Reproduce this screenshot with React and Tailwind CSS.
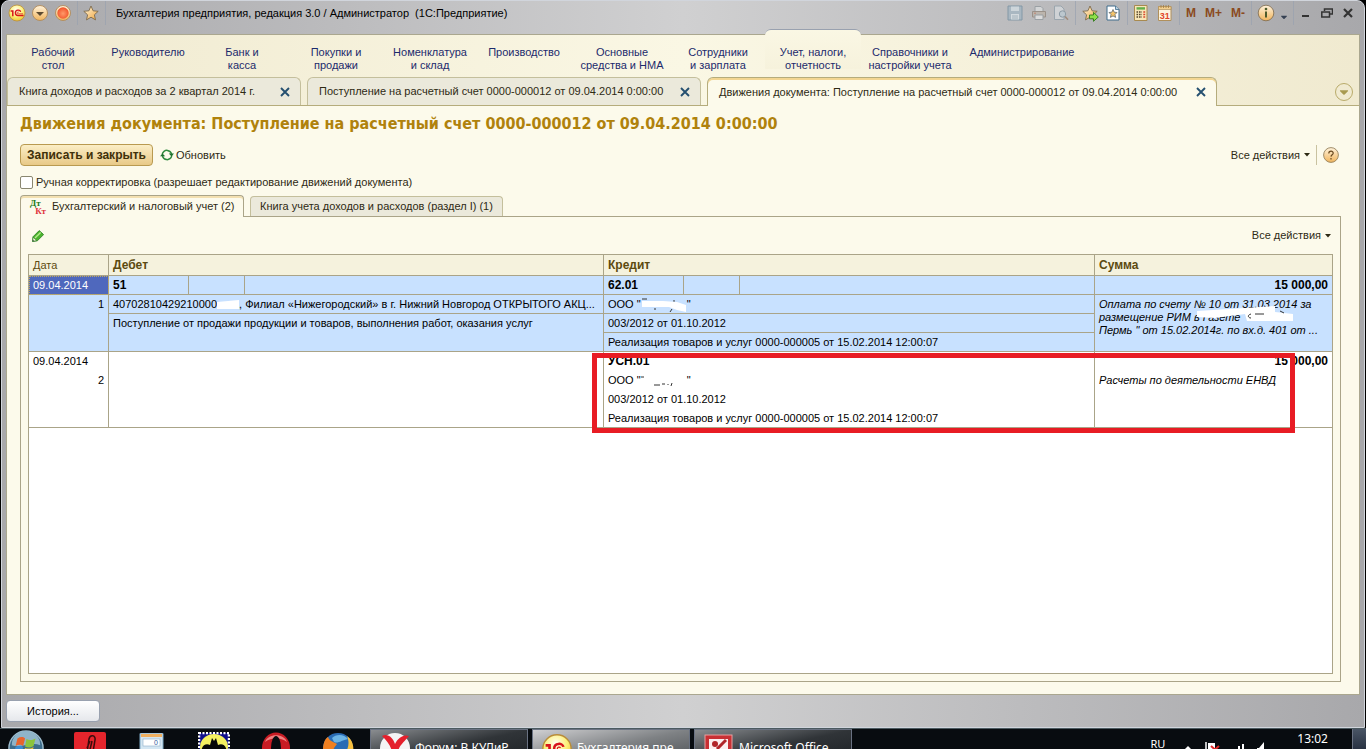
import { clsx } from "clsx";
import { FaCaretDown } from "react-icons/fa";

const sections = [
  { lines: ["Рабочий", "стол"], width: "w-[92px]" },
  { lines: ["Руководителю"], width: "w-[98px]" },
  { lines: ["Банк и", "касса"], width: "w-[90px]" },
  { lines: ["Покупки и", "продажи"], width: "w-[98px]" },
  { lines: ["Номенклатура", "и склад"], width: "w-[90px]" },
  { lines: ["Производство"], width: "w-[98px]" },
  { lines: ["Основные", "средства и НМА"], width: "w-[98px]" },
  { lines: ["Сотрудники", "и зарплата"], width: "w-[94px]" },
  { lines: ["Учет, налоги,", "отчетность"], width: "w-[96px]", active: true },
  { lines: ["Справочники и", "настройки учета"], width: "w-[98px]" },
  { lines: ["Администрирование"], width: "w-[126px]" },
];

const openTabs = [
  { title: "Книга доходов и расходов за 2 квартал 2014 г.", width: "w-[294px]" },
  { title: "Поступление на расчетный счет 0000-000012 от 09.04.2014 0:00:00", width: "w-[394px]" },
  {
    title: "Движения документа: Поступление на расчетный счет 0000-000012 от 09.04.2014 0:00:00",
    width: "w-[510px]",
    active: true,
  },
];

const LogoIcon = ({ className }) => (
  <svg viewBox="0 0 18 18" className={className} aria-hidden="true">
    <defs>
      <radialGradient id="logoFill" cx="0.45" cy="0.3" r="0.8">
        <stop offset="0" stopColor="#fffef0" />
        <stop offset="0.5" stopColor="#fdf07a" />
        <stop offset="1" stopColor="#e8b820" />
      </radialGradient>
    </defs>
    <circle cx="9" cy="9" r="8" fill="url(#logoFill)" stroke="#b98c3a" strokeWidth="0.8" />
    <path d="M2.6 7 H4.8 V12.2" fill="none" stroke="#d8141c" strokeWidth="1.5" />
    <path d="M12.6 7.8 C12.2 5.4 7.4 5.4 7.4 8.8 C7.4 11 8.8 11.5 10 11.5 H15.6" fill="none" stroke="#d8141c" strokeWidth="1.4" />
    <path d="M11 8.4 C10.6 7.7 9.2 7.8 9.2 8.8 C9.2 9.5 9.8 9.8 10.4 9.8 H15" fill="none" stroke="#d8141c" strokeWidth="0.7" />
  </svg>
);

const RoundIcon = ({ red }) => (
  <svg viewBox="0 0 18 18" className="size-[18px]" aria-hidden="true">
    <defs>
      <linearGradient id="orb" x1="0" y1="0" x2="0" y2="1">
        <stop offset="0" stopColor="#fff3dc" />
        <stop offset="1" stopColor="#f0b45c" />
      </linearGradient>
      <radialGradient id="orbRed" cx="0.5" cy="0.55" r="0.5">
        <stop offset="0" stopColor="#ff9a6a" />
        <stop offset="1" stopColor="#f2582e" />
      </radialGradient>
    </defs>
    <circle cx="9" cy="9" r="7.5" fill="url(#orb)" stroke="#b08a5a" strokeWidth="0.9" />
    {red ? (
      <circle cx="9" cy="9" r="5.7" fill="url(#orbRed)" />
    ) : (
      <path d="M5 8 H13 L9 12 Z" fill="#5c4a30" />
    )}
  </svg>
);

const starPath = "M8 1 L10.1 5.8 L15.2 6.3 L11.4 9.8 L12.5 14.9 L8 12.2 L3.5 14.9 L4.6 9.8 L0.8 6.3 L5.9 5.8 Z";

const StarIcon = ({ arrow }) => (
  <svg viewBox="0 0 17 17" className="size-[17px]" aria-hidden="true">
    <defs>
      <linearGradient id="star" x1="0" y1="0" x2="1" y2="1">
        <stop offset="0" stopColor="#fff8e0" />
        <stop offset="1" stopColor="#f0a43c" />
      </linearGradient>
    </defs>
    <path d={starPath} fill="url(#star)" stroke="#7d6a4c" strokeWidth="0.9" strokeLinejoin="round" />
    {arrow && (
      <path d="M7.5 10 H11.5 V7.3 L16.3 12 L11.5 16.3 V13.8 H7.5 Z" fill="#8fe04a" stroke="#2c7a18" strokeWidth="0.9" />
    )}
  </svg>
);

const SaveIcon = () => (
  <svg viewBox="0 0 16 16" className="size-4" aria-hidden="true">
    <path d="M1 1 H15 V15 H1 Z" fill="#a9b7c1" stroke="#8398a6" />
    <path d="M4 1.5 H12 V6 H4 Z" fill="#cdd5da" />
    <path d="M4 9 H12 V14.5 H4 Z" fill="#d4dade" />
    <path d="M5 11 H11 M5 13 H11" stroke="#97a8b3" strokeWidth="0.8" />
  </svg>
);

const PrintIcon = () => (
  <svg viewBox="0 0 16 16" className="size-4" aria-hidden="true">
    <path d="M4 6 V1.5 H10 L12 3.5 V6" fill="#d3d5d6" stroke="#9aa0a4" />
    <path d="M1.5 6.5 H14.5 V12 H1.5 Z" fill="#bcb5ad" stroke="#9a9189" />
    <path d="M4 10 H12 V14.5 H4 Z" fill="#dcdcdc" stroke="#9aa0a4" />
    <path d="M3 8.2 H5" stroke="#bd8573" />
  </svg>
);

const PreviewIcon = () => (
  <svg viewBox="0 0 16 16" className="size-4" aria-hidden="true">
    <path d="M1.5 1 H8 L11 4 V14.5 H1.5 Z" fill="#cfd2d5" stroke="#9aa5ad" />
    <circle cx="9.5" cy="9" r="3.2" fill="#bcc7ce" stroke="#8d9ba5" />
    <path d="M12 11.5 L15 14.8" stroke="#a08c7c" strokeWidth="1.6" />
  </svg>
);

const FavouriteIcon = () => (
  <svg viewBox="0 0 14 16" className="h-4 w-3.5" aria-hidden="true">
    <path d="M1 1 H9.5 L13 4.5 V15 H1 Z" fill="#fff" stroke="#3f6c8c" />
    <path d="M9.5 1 V4.5 H13" fill="#b9d3e4" stroke="#3f6c8c" strokeWidth="0.8" />
    <path
      d="M7 4.5 L8.2 7.2 L11 7.5 L9 9.5 L9.6 12.4 L7 10.9 L4.4 12.4 L5 9.5 L3 7.5 L5.8 7.2 Z"
      fill="#f5c46a"
      stroke="#4c5a66"
      strokeWidth="0.7"
    />
  </svg>
);

const CalcIcon = () => (
  <svg viewBox="0 0 14 16" className="h-4 w-3.5" aria-hidden="true">
    <path d="M0.5 0.5 H13 V15.5 H0.5 Z" fill="#f8e6b8" stroke="#a88a50" />
    <path d="M2.5 2.2 H11 V4.6 H2.5 Z" fill="#63b04a" />
    <path d="M2.5 7 H8 M2.5 9.5 H8 M2.5 12 H8" stroke="#54452c" strokeWidth="1.3" strokeDasharray="1.6 0.9" />
    <path d="M9.3 7 H11.2 M9.3 9.5 H11.2 M9.3 12 H11.2" stroke="#d8482c" strokeWidth="1.3" />
  </svg>
);

const CalendarIcon = () => (
  <svg viewBox="0 0 14 16" className="h-4 w-3.5" aria-hidden="true">
    <path d="M0.5 1.5 H13 V15.5 H0.5 Z" fill="#fdf3e0" stroke="#b0905c" />
    <path d="M0.5 1.5 H13 V4.5 H0.5 Z" fill="#f3cf8e" stroke="#b0905c" strokeWidth="0.7" />
    <path d="M3 0 V3 M5.5 0 V3 M8 0 V3 M10.5 0 V3" stroke="#a07c48" strokeWidth="0.8" />
    <text x="6.8" y="13.6" textAnchor="middle" fontSize="9" fontWeight="bold" fill="#e0442a" fontFamily="Liberation Sans, sans-serif">
      31
    </text>
  </svg>
);

const InfoIcon = () => (
  <svg viewBox="0 0 18 18" className="size-[18px]" aria-hidden="true">
    <circle cx="9" cy="9" r="7.8" fill="url(#orb)" stroke="#7d6a4c" strokeWidth="0.8" />
    <circle cx="9" cy="5" r="1.3" fill="#4c5a2a" />
    <path d="M9 7.5 V13.5" stroke="#4c5a2a" strokeWidth="2" />
  </svg>
);

const CloseIcon = () => (
  <svg viewBox="0 0 10 10" className="size-2.5" aria-hidden="true">
    <path d="M1 1 L9 9 M9 1 L1 9" stroke="#255070" strokeWidth="1.9" />
  </svg>
);

const RefreshIcon = () => (
  <svg viewBox="0 0 14 12" className="h-3 w-3.5" aria-hidden="true">
    <path d="M2.2 5.5 C2.5 2.8 5 1 7.5 1.4 C9.4 1.7 11 3 11.6 5" fill="none" stroke="#2f8a3e" strokeWidth="1.5" />
    <path d="M11.8 6.5 C11.4 9.2 9 11 6.5 10.6 C4.6 10.3 3 9 2.4 7" fill="none" stroke="#2f8a3e" strokeWidth="1.5" />
    <path d="M8.8 4.6 H14 L11.5 7.6 Z M0 7.2 H5.2 L2.5 4.4 Z" fill="#1f7030" />
  </svg>
);

const PencilIcon = () => (
  <svg viewBox="0 0 12 12" className="size-3" aria-hidden="true">
    <path d="M0.6 11.4 L1 6.8 L7.2 0.6 L11.6 4.6 L5.4 10.8 Z" fill="#4cb42e" stroke="#237a1c" strokeWidth="0.8" />
    <path d="M3 8 L8.6 2.4" stroke="#b4ec8c" strokeWidth="1.4" />
    <path d="M1.2 7.2 L4.8 10.6 L0.6 11.4 Z" fill="#f2f2d8" stroke="#237a1c" strokeWidth="0.6" />
    <path d="M0.6 11.4 L1 9.9 L2 11 Z" fill="#223" />
  </svg>
);

const Separator = () => <span className="h-6 w-px bg-gray-400/70" />;

const TitleBar = () => (
  <header className="flex h-[33px] items-start pt-px pr-1.5 pl-0.5">
    <div className="flex h-[22px] items-center">
      <button type="button" aria-label="Главное меню"><LogoIcon className="size-[18px]" /></button>
      <button type="button" aria-label="Меню функций" className="ml-[5px]"><RoundIcon /></button>
      <button type="button" aria-label="Закрыть окно" className="mx-[5px]"><RoundIcon red /></button>
      <Separator />
      <button type="button" aria-label="Избранное" className="mx-[5px]"><StarIcon /></button>
      <Separator />
    </div>
    <h1 className="ml-2.5 h-[22px] whitespace-pre text-[11px] leading-[22px] text-black">
      Бухгалтерия предприятия, редакция 3.0 / Администратор  (1С:Предприятие)
    </h1>
    <div className="ml-auto flex h-[22px] items-center">
      <button type="button" aria-label="Сохранить"><SaveIcon /></button>
      <button type="button" aria-label="Печать" className="ml-2"><PrintIcon /></button>
      <button type="button" aria-label="Просмотр" className="mx-1.5"><PreviewIcon /></button>
      <Separator />
      <button type="button" aria-label="Добавить в избранное" className="ml-1.5"><StarIcon arrow /></button>
      <button type="button" aria-label="Избранное" className="mx-[7px]"><FavouriteIcon /></button>
      <Separator />
      <button type="button" aria-label="Калькулятор" className="ml-1.5"><CalcIcon /></button>
      <button type="button" aria-label="Календарь" className="mr-[7px] ml-2.5"><CalendarIcon /></button>
      <Separator />
      <div className="flex gap-[9px] px-1.5 text-xs font-bold text-[#8a4a20]">
        <button type="button">M</button>
        <button type="button">M+</button>
        <button type="button">M-</button>
      </div>
      <Separator />
      <button type="button" aria-label="Справка" className="ml-[5px]"><InfoIcon /></button>
      <button type="button" aria-label="Ещё" className="mx-1 pt-2"><FaCaretDown className="size-2.5 text-gray-700" /></button>
      <Separator />
      <button type="button" aria-label="Свернуть" className="ml-1.5">
        <svg viewBox="0 0 12 12" className="size-3"><path d="M2 9 H9" stroke="#333" strokeWidth="2" /></svg>
      </button>
      <button type="button" aria-label="Восстановить" className="mx-[9px]">
        <svg viewBox="0 0 12 12" className="size-3">
          <path d="M3.5 4 V2 H11.5 V7 H9 M0.8 5 H8.5 V10 H0.8 Z" fill="none" stroke="#333" strokeWidth="1.5" />
        </svg>
      </button>
      <button type="button" aria-label="Закрыть">
        <svg viewBox="0 0 12 12" className="size-3"><path d="M2 2 L10 10 M10 2 L2 10" stroke="#333" strokeWidth="2.2" /></svg>
      </button>
    </div>
  </header>
);

const SectionNav = () => (
  <nav className="flex h-[42px] items-start">
    {sections.map((section) => (
      <a
        key={section.lines[0]}
        href="#"
        className={clsx(
          "block shrink-0 text-center text-[11px] leading-[13px] whitespace-nowrap text-[#1c2a6c]",
          section.width,
          section.active
            ? "-mt-1.5 h-10 rounded-t-md border-t border-gray-400 bg-linear-to-b from-[#faf7e4] to-[#f6f2dc] pt-4"
            : "pt-[11px]"
        )}
      >
        {section.lines.map((line) => (
          <span key={line} className="block">{line}</span>
        ))}
      </a>
    ))}
  </nav>
);

const WindowTabs = () => (
  <div className="flex h-7 items-end gap-1.5">
    {openTabs.map((tab) => (
      <div
        key={tab.title}
        className={clsx(
          "flex h-7 shrink-0 items-center justify-between rounded-t-md border border-b-0 pr-2.5 pl-[11px] text-[11px] whitespace-nowrap text-[#2e2a14]",
          tab.width,
          tab.active
            ? "relative z-10 -mb-px h-[29px] border-[#b5ac7c] bg-[#fcfaeb] shadow-[inset_0_2px_0_#f3d692]"
            : "border-[#c4bf9c] bg-[#ebe9db]"
        )}
      >
        <a href="#">{tab.title}</a>
        <button type="button" aria-label="Закрыть вкладку"><CloseIcon /></button>
      </div>
    ))}
    <button
      type="button"
      aria-label="Список вкладок"
      className="mr-1.5 mb-1 ml-auto flex size-[18px] items-center justify-center rounded-full border border-[#b9ab6a] text-[#a89a50]"
    >
      <FaCaretDown className="size-3.5" />
    </button>
  </div>
);

const ActionsButton = () => (
  <button type="button" className="flex items-center gap-1 text-[11px]">
    Все действия
    <svg viewBox="0 0 6 4" className="h-1 w-1.5" aria-hidden="true"><path d="M0 0 H6 L3 3.6 Z" fill="#2e2a14" /></svg>
  </button>
);

const HiddenName = ({ remnants }) => (
  <svg viewBox="0 0 46 14" className="inline-block h-3.5 w-[46px] align-middle" aria-hidden="true">
    {remnants ? (
      <path d="M0 3 H3 M13 11 H19 M21 10 H24 M27 10 V11 M31 9 L30 12" stroke="#333" fill="none" />
    ) : (
      <>
        <path d="M1 1 H6 M14 10 V12 M31 11 L29 14 M33 2 V4" stroke="#333" fill="none" />
        <path d="M1 3 L22 3 L36 4 L45 7 V14 L36 12 L28 9 L1 9 Z" fill="#fff" />
      </>
    )}
  </svg>
);

const cell = "h-[19px] border-b border-[#aaa488] px-1 py-0 text-left align-top font-normal leading-[18px] whitespace-nowrap overflow-hidden";
const cellR = cell + " border-r";

const EntriesTable = () => (
  <div className="relative flex-1 border border-[#aaa488] bg-white">
    <table className="w-full table-fixed border-separate border-spacing-0 text-[11px] text-black">
      <colgroup>
        <col className="w-20" />
        <col className="w-20" />
        <col className="w-14" />
        <col />
        <col className="w-20" />
        <col className="w-14" />
        <col className="w-[355px]" />
        <col className="w-[237px]" />
      </colgroup>
      <thead>
        <tr className="bg-[#f5f2dd] text-[#5c4a10]">
          <th className="h-[21px] border-r border-b border-[#aaa488] px-1 py-0 text-left font-normal">Дата</th>
          <th colSpan={3} className="border-r border-b border-[#aaa488] px-1 py-0 text-left text-xs">Дебет</th>
          <th colSpan={3} className="border-r border-b border-[#aaa488] px-1 py-0 text-left text-xs">Кредит</th>
          <th className="border-b border-[#aaa488] px-1 py-0 text-left text-xs">Сумма</th>
        </tr>
      </thead>
      <tbody className="bg-[#c8e1ff]">
        <tr>
          <td className={clsx(cellR, "bg-[#4f68bd] text-white outline-1 -outline-offset-1 outline-dotted outline-[#c0a860]")}>09.04.2014</td>
          <td className={clsx(cellR, "text-xs")}><b>51</b></td>
          <td className={cellR}></td>
          <td className={cellR}></td>
          <td className={clsx(cellR, "text-xs")}><b>62.01</b></td>
          <td className={cellR}></td>
          <td className={cellR}></td>
          <td className={clsx(cell, "text-xs")}><b className="block text-right">15 000,00</b></td>
        </tr>
        <tr>
          <td rowSpan={3} className={cellR}><span className="block text-right">1</span></td>
          <td colSpan={3} className={clsx(cellR, "text-ellipsis")}>
            40702810429210000
            <svg viewBox="0 0 22 12" className="inline-block h-3 w-[22px] align-middle" aria-hidden="true">
              <path d="M0 3 L22 1 V10 H0 Z" fill="#fff" />
            </svg>
            , Филиал «Нижегородский» в г. Нижний Новгород ОТКРЫТОГО АКЦ...
          </td>
          <td colSpan={3} className={cellR}>ООО "<HiddenName />"</td>
          <td rowSpan={3} className={cell}>
            <div className="relative pt-[3px] leading-[13px] italic">
              Оплата по счету № 10 от 31.03 2014 за
              <br />
              размещение РИМ в Газете
              <br />
              Пермь " от 15.02.2014г. по вх.д. 401 от ...
              <svg viewBox="0 0 110 24" className="absolute top-2 left-24 h-6 w-[110px]" aria-hidden="true">
                <path d="M2 8 L50 5 L80 3 V9 L98 11 V18 H52 L50 11 L20 15 L2 14 Z" fill="#fff" />
                <path d="M56 11 C52 12 53 15 56 15 M60 11 H69 M85 8 L89 10" stroke="#333" fill="none" />
              </svg>
            </div>
          </td>
        </tr>
        <tr>
          <td colSpan={3} rowSpan={2} className={cellR}>Поступление от продажи продукции и товаров, выполнения работ, оказания услуг</td>
          <td colSpan={3} className={cellR}>003/2012 от 01.10.2012</td>
        </tr>
        <tr>
          <td colSpan={3} className={cellR}>Реализация товаров и услуг 0000-000005 от 15.02.2014 12:00:07</td>
        </tr>
      </tbody>
      <tbody>
        <tr>
          <td className={clsx(cellR, "border-b-0")}>09.04.2014</td>
          <td colSpan={3} rowSpan={4} className={cellR}></td>
          <td colSpan={3} className={clsx(cellR, "border-b-0 text-xs")}><b>УСН.01</b></td>
          <td className={clsx(cell, "border-b-0 text-xs")}><b className="block text-right">15 000,00</b></td>
        </tr>
        <tr>
          <td rowSpan={3} className={cellR}><span className="block text-right">2</span></td>
          <td colSpan={3} className={clsx(cellR, "border-b-0")}>ООО "<HiddenName remnants />"</td>
          <td rowSpan={3} className={cell}><i>Расчеты по деятельности ЕНВД</i></td>
        </tr>
        <tr>
          <td colSpan={3} className={clsx(cellR, "border-b-0")}>003/2012 от 01.10.2012</td>
        </tr>
        <tr>
          <td colSpan={3} className={cellR}>Реализация товаров и услуг 0000-000005 от 15.02.2014 12:00:07</td>
        </tr>
      </tbody>
    </table>
    <div className="pointer-events-none absolute top-[98px] right-[37px] left-[563px] h-20 border-[5px] border-[#e81c24]" />
  </div>
);

const DocumentForm = () => (
  <main className="flex flex-1 flex-col border-t border-[#b5ac7c] bg-[#fcfaeb] pr-3 pb-3 pl-[13px] text-[#2e2a14]">
    <h2 className="mt-1.5 h-6 font-[DejaVu_Sans_Condensed,DejaVu_Sans,sans-serif] text-base leading-6 font-bold whitespace-nowrap text-[#b0820c]">
      Движения документа: Поступление на расчетный счет 0000-000012 от 09.04.2014 0:00:00
    </h2>
    <div className="mt-2 flex h-[22px] items-center">
      <button
        type="button"
        className="h-[22px] w-[133px] rounded-sm border border-[#b99a50] bg-linear-to-b from-[#fbeec6] to-[#e8c987] text-xs leading-5 font-bold whitespace-nowrap text-[#40300a]"
      >
        Записать и закрыть
      </button>
      <button type="button" className="ml-[7px] flex items-center gap-0.5 text-[11px]">
        <RefreshIcon />
        Обновить
      </button>
      <div className="ml-auto flex items-center">
        <ActionsButton />
        <span className="mx-1.5 h-5 w-px bg-[#c9c2a0]" />
        <button type="button" aria-label="Справка" className="mr-2">
          <svg viewBox="0 0 16 16" className="size-4">
            <circle cx="8" cy="8" r="7.4" fill="url(#orb)" stroke="#96825e" strokeWidth="0.9" />
            <path d="M5.8 6.4 C5.8 3.4 10.4 3.6 10.2 6.2 C10.1 7.8 8.1 7.7 8 9.6 M8 11 V12.4" fill="none" stroke="#6a4a20" strokeWidth="1.2" />
          </svg>
        </button>
      </div>
    </div>
    <label className="mt-2.5 flex h-[13px] items-center gap-[3px] text-[11px] whitespace-nowrap">
      <input type="checkbox" className="size-[13px] appearance-none rounded-xs border border-[#8a8770] bg-white" />
      Ручная корректировка (разрешает редактирование движений документа)
    </label>
    <div className="mt-[7px] flex h-5 items-end gap-1.5 text-[11px] whitespace-nowrap">
      <button
        type="button"
        className="relative z-10 -mb-px flex h-[22px] w-56 items-center rounded-t border border-b-0 border-[#aaa488] bg-[#fcfaeb] pl-[9px] shadow-[inset_0_2px_0_#f3e0b0]"
      >
        <span className="mr-1.5 flex w-4 flex-col font-[Liberation_Serif,serif] text-[9px] leading-2 font-bold">
          <span className="text-left text-[#1c7a1c]">Дт</span>
          <span className="text-right text-[#e0343c]">Кт</span>
        </span>
        Бухгалтерский и налоговый учет (2)
      </button>
      <button type="button" className="h-5 w-[253px] rounded-t border border-b-0 border-[#c4bf9c] bg-[#ebe9db]">
        Книга учета доходов и расходов (раздел I) (1)
      </button>
    </div>
    <section className="mr-1.5 flex flex-1 flex-col border border-[#aaa488] px-[7px] pb-[7px]">
      <div className="flex h-[37px] items-center justify-between">
        <button type="button" aria-label="Изменить" className="ml-1"><PencilIcon /></button>
        <div className="mr-0.5"><ActionsButton /></div>
      </div>
      <EntriesTable />
    </section>
  </main>
);

const TaskButton = ({ icon, active, children }) => (
  <button
    type="button"
    className={clsx(
      "flex h-9 w-[158px] items-start gap-1 border border-gray-500 pl-2 text-xs whitespace-nowrap text-white",
      active
        ? "border-gray-200 bg-linear-to-br from-[#d0d0d2] via-[#7e8184] to-[#4c5054]"
        : "bg-linear-to-br from-[#8a8d90] via-[#303438] to-[#1c2024]"
    )}
  >
    {icon}
    <span className="pt-2.5">{children}</span>
  </button>
);

const Taskbar = () => (
  <footer className="flex h-[21px] items-start overflow-hidden border-t border-[#4c5a60] bg-[#080c10] font-[Noto_Sans,sans-serif]">
    <div className="flex gap-[30px] pl-2">
      <button type="button" aria-label="Пуск" className="pt-px">
        <svg viewBox="0 0 38 38" className="size-9">
          <circle cx="19" cy="19" r="18" fill="#3d6d8c" stroke="#9dbccd" strokeWidth="1.5" />
          <path d="M4 16 A15 15 0 0 1 34 16 C24 12 14 20 4 16 Z" fill="#8fb4c8" />
          <path d="M10 9 C13 7 16 7 18 9 L16 17 C14 15 11 15 8 17 Z" fill="#e8642c" />
          <path d="M19.5 9.5 C22 11 25 11 29 9 L27 17 C24 19 21 19 18 17.5 Z" fill="#8cc43c" />
          <path d="M8 18 C11 16 14 16 16 18 L14 26 H6 Z" fill="#3c8cd0" />
          <path d="M18 19 C21 20 24 20 27 18 L25 26 H16 Z" fill="#f4c430" />
        </svg>
      </button>
      <svg viewBox="0 0 32 32" className="mt-[3px] size-8">
        <rect width="32" height="32" rx="2" fill="#e4252c" />
        <path d="M12 28 L15 7 C16 2 22 3 21 8 L18 26 M13 16 L16 9 M15 22 L18 9" fill="none" stroke="#3a0c0c" strokeWidth="1.5" />
      </svg>
      <svg viewBox="0 0 32 32" className="mt-1 size-8">
        <rect x="4" width="23" height="28" rx="1" fill="#d4e6f2" stroke="#7ca8c4" />
        <rect x="5" y="1" width="21" height="3" fill="#f0b060" />
        <rect x="7" y="6" width="17" height="7" fill="#fff" stroke="#8cb0c8" strokeWidth="0.6" />
        <text x="18" y="12" fontSize="7" fontFamily="Liberation Sans, sans-serif" fill="#345c9c">0</text>
      </svg>
      <svg viewBox="0 0 32 32" className="mt-[3px] size-8">
        <rect x="1" y="1" width="30" height="30" fill="#10108c" stroke="#fff" strokeWidth="2.5" strokeDasharray="2 1.5" />
        <ellipse cx="16" cy="15" rx="14" ry="13" fill="#f4f060" />
        <path d="M3 22 C3 13 8 11 12 13 L14 6 L16 9 L18 6 L20 13 C24 11 29 13 29 22 Z" fill="#080808" />
      </svg>
      <svg viewBox="0 0 32 32" className="mt-[3px] size-8">
        <ellipse cx="16" cy="16" rx="14" ry="15.5" fill="#c81c24" />
        <path d="M5 10 C8 1 24 1 27 10 C20 5 12 5 5 10 Z" fill="#f08080" />
        <ellipse cx="16" cy="16" rx="5" ry="12" fill="#080c10" />
      </svg>
      <svg viewBox="0 0 32 32" className="mt-[3px] size-8">
        <circle cx="16" cy="16" r="15" fill="#2a6cb4" />
        <path d="M10 6 C14 2 22 2 26 7 C20 8 16 12 12 10 Z" fill="#6cb4e4" />
        <path d="M1 18 C1 10 4 6 6 5 C7 9 12 10 15 12 C13 15 10 17 12 21 L16 32 C6 32 1 26 1 18 Z" fill="#f08020" />
        <path d="M25 4 C32 9 33 18 29 25 L25 18 C27 13 27 9 25 4 Z" fill="#f8c040" />
      </svg>
    </div>
    <div className="ml-4 flex gap-1">
      <TaskButton
        icon={
          <svg viewBox="0 0 32 32" className="mt-0.5 size-8 shrink-0">
            <circle cx="16" cy="16" r="15" fill="#f4f4f4" />
            <path d="M3 4 C9 1 14 6 16 12 C19 6 24 2 30 4 C26 9 19.5 14 19 20 V32 H13 V20 C12 14 8 9 3 4 Z" fill="#e4202c" />
          </svg>
        }
      >
        Форум: В КУДиР
      </TaskButton>
      <TaskButton active icon={<LogoIcon className="mt-[3px] size-8 shrink-0" />}>Бухгалтерия пре...</TaskButton>
      <TaskButton
        icon={
          <svg viewBox="0 0 32 32" className="mt-1 size-8 shrink-0">
            <rect x="2" y="1" width="27" height="28" fill="#c83034" stroke="#e8a0a0" />
            <rect x="6" y="5" width="19" height="20" fill="#fbeeee" />
            <circle cx="12" cy="10" r="3" fill="#b02428" />
            <path d="M14 15 L23 6" stroke="#b02428" strokeWidth="3" />
          </svg>
        }
      >
        Microsoft Office
      </TaskButton>
    </div>
    <div className="ml-auto flex text-xs text-white">
      <span className="mt-2 mr-5 text-[11px]">RU</span>
      <svg viewBox="0 0 80 24" className="mt-2 mr-8 h-6 w-20" aria-hidden="true">
        <path d="M0 12 L3 9 L6 12 Z" fill="#fff" />
        <path d="M21 5 V22" stroke="#fff" strokeWidth="1.5" />
        <path d="M23 6 H30 V16 H23 Z" fill="#fff" />
        <path d="M26 9 L34 16 M34 9 L26 16" stroke="#e02828" strokeWidth="2" />
        <path d="M51 20 V12 M54 20 V9 M58 20 V7" stroke="#fff" strokeWidth="2" />
        <path d="M72 11 H74 L79 5 V18 L74 14 H72 Z" fill="#fff" />
      </svg>
      <time className="mt-0.5 mr-6">13:02</time>
      <span className="h-9 w-3.5 border-l border-gray-500 bg-linear-to-b from-gray-600 to-gray-900" />
    </div>
  </footer>
);

const App = () => {
  return (
    <div className="flex h-screen flex-col overflow-hidden bg-black font-[Liberation_Sans,Arial,sans-serif]">
      <div className="mx-px flex flex-1 flex-col rounded-t-lg border border-gray-300 bg-linear-to-r from-[#a8a8ab] via-[#d0d0d1] to-[#a8a8ab] px-1">
        <TitleBar />
        <div className="flex flex-1 flex-col border border-[#aaa78f] bg-linear-to-r from-[#f0ead0] via-[#faf7e4] to-[#f0ead0]">
          <SectionNav />
          <WindowTabs />
          <DocumentForm />
        </div>
        <div className="flex h-8 items-center">
          <button
            type="button"
            className="h-[22px] w-[94px] rounded-sm border border-gray-400 bg-linear-to-b from-white to-gray-200 text-[11px] text-black"
          >
            История...
          </button>
        </div>
      </div>
      <Taskbar />
    </div>
  );
};

export default App;
